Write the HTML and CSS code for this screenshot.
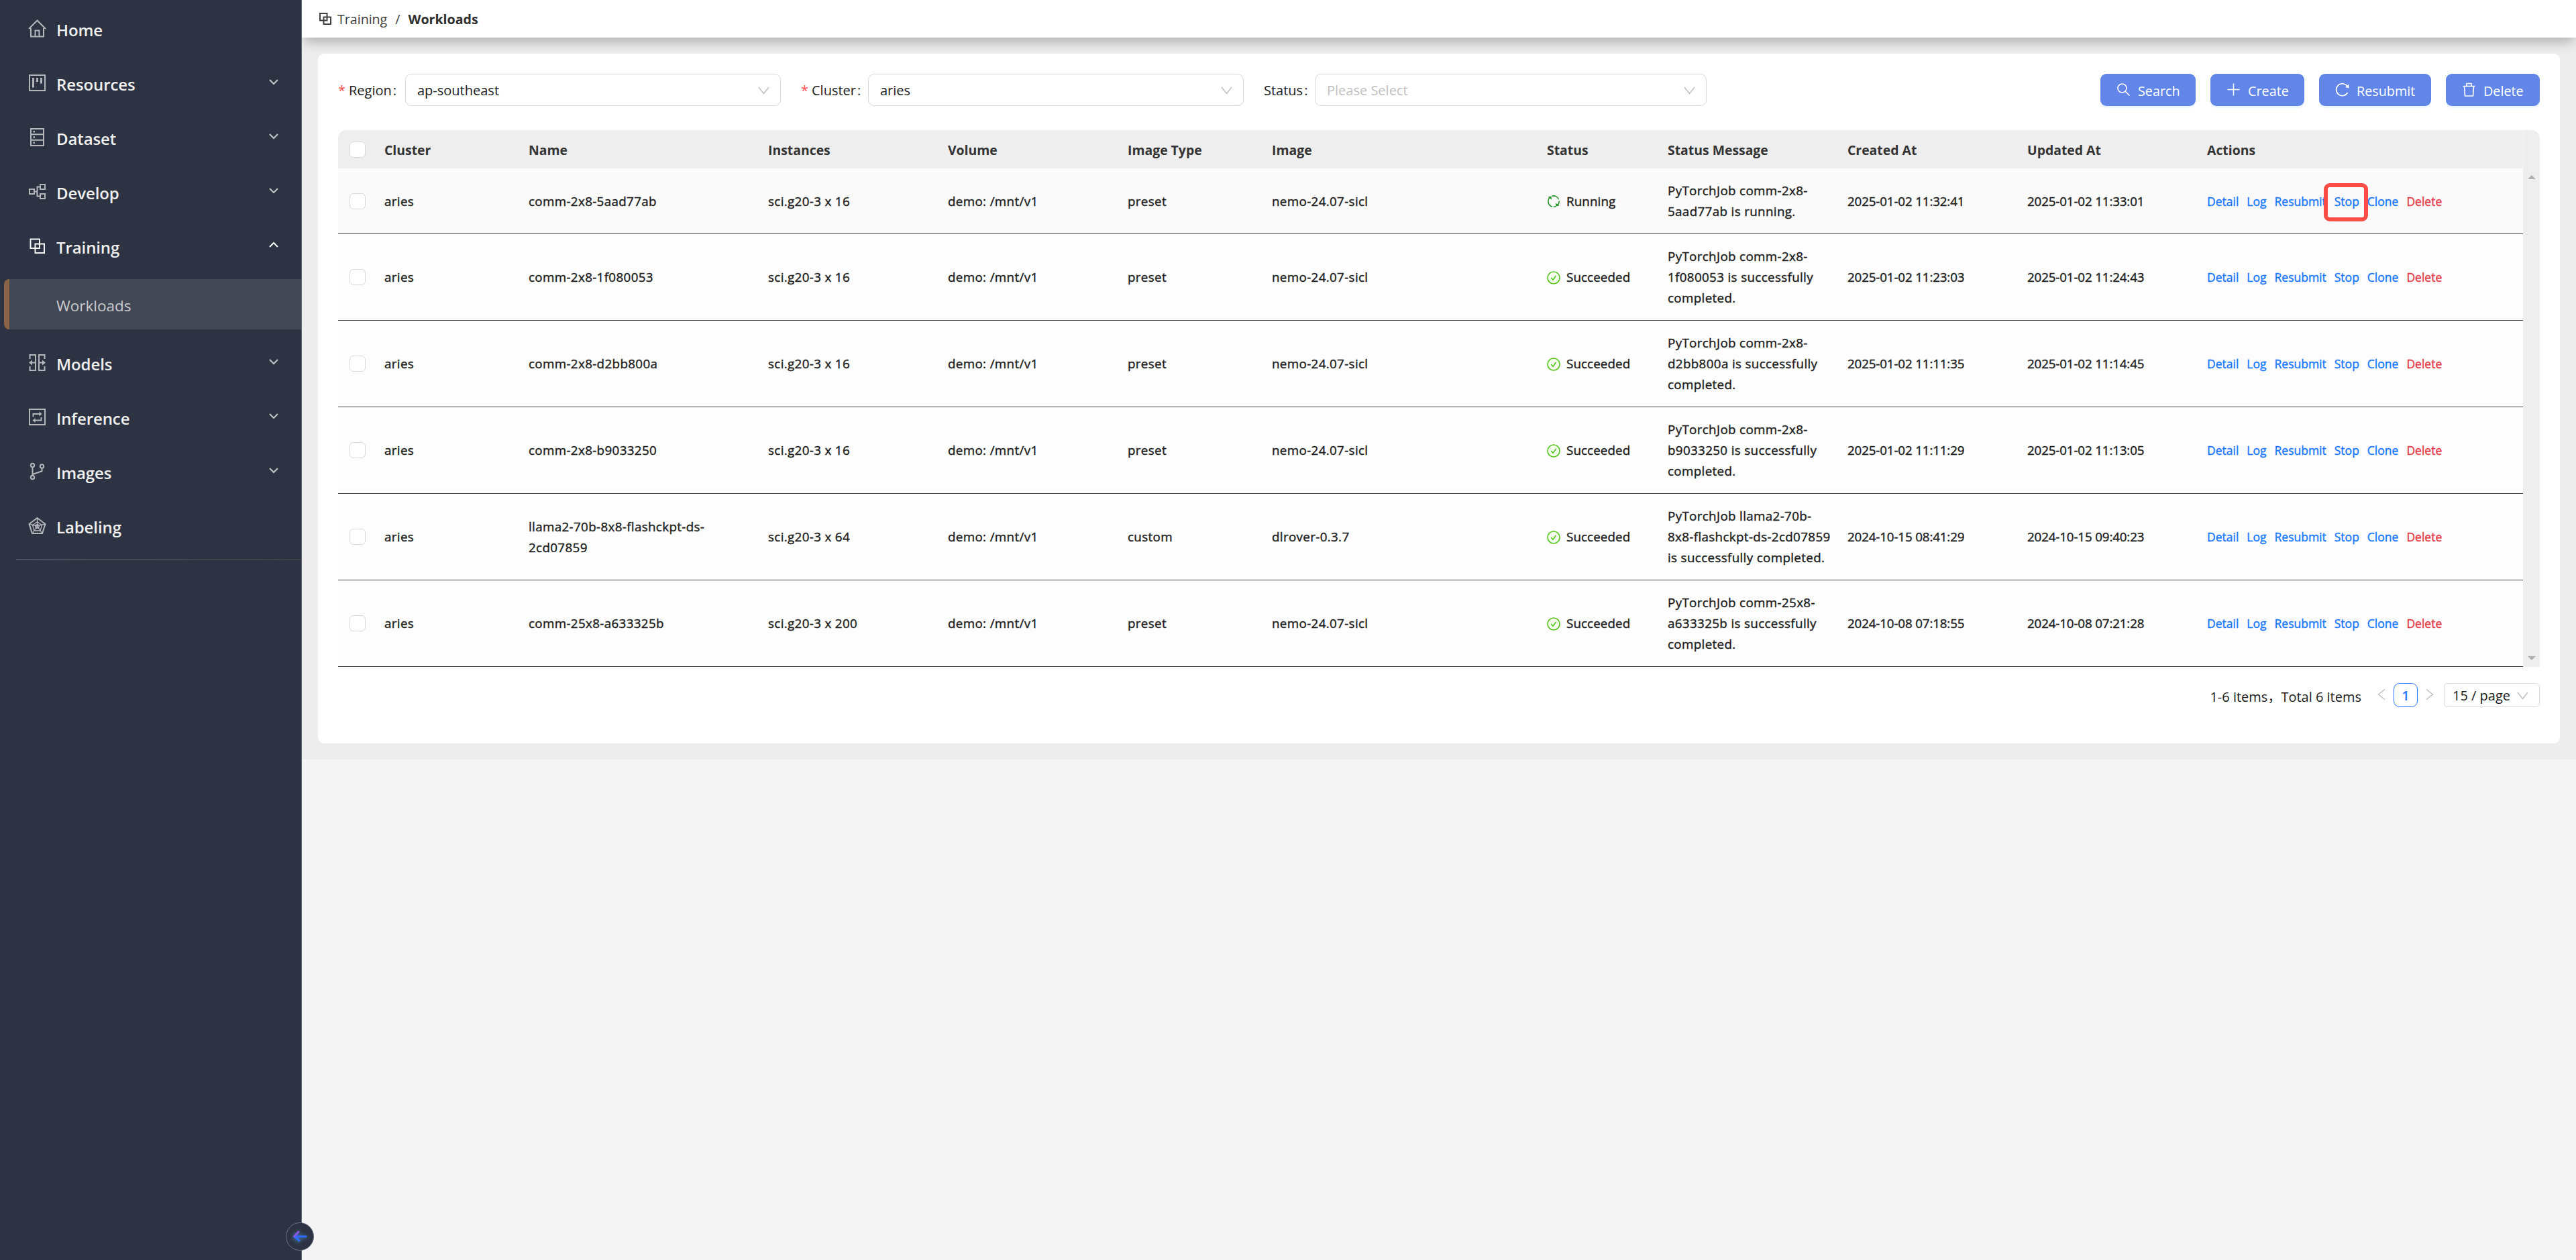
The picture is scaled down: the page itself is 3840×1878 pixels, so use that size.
FILE: index.html
```
<!DOCTYPE html>
<html lang="en">
<head>
  <meta charset="UTF-8">
  <meta name="viewport" content="width=device-width, initial-scale=1.0">
  <title>Workloads</title>
  <link rel="stylesheet" href="styles.css">
</head>
<body>
  <aside class="sidebar">
    <nav class="menu">
      <a class="menu-item">
        <svg class="menu-icon" viewBox="0 0 27 27"><path d="M1 14L13.5 1.5L26 14M4 13v12.5h19V13M10.5 25v-8.500h6V25"/></svg>
        <span>Home</span>
      </a>
      <a class="menu-item">
        <svg class="menu-icon" viewBox="0 0 27 27"><path d="M2 2h23v23H2z"/><path class="solid" d="M6 6h3v14.500H6zM12 6h3v6h-3zM18 6h3v8.500h-3z"/></svg>
        <span>Resources</span>
        <svg class="caret" viewBox="0 0 14 10"><path d="M1 2l6 6l6-6"/></svg>
      </a>
      <a class="menu-item">
        <svg class="menu-icon" viewBox="0 0 27 27"><path d="M4 1h19v25H4zM4 9.300h19M4 17.700h19"/><path class="solid" d="M7.500 4h2.500v2.500H7.500zM7.500 12.200h2.500v2.500H7.500zM7.500 20.500h2.500V23H7.500z"/></svg>
        <span>Dataset</span>
        <svg class="caret" viewBox="0 0 14 10"><path d="M1 2l6 6l6-6"/></svg>
      </a>
      <a class="menu-item">
        <svg class="menu-icon" viewBox="0 0 27 27"><path d="M2 10h7v7H2zM18 3h7v7h-7zM18 17h7v7h-7zM9 13.500h4.500M18 6.500h-4.500v14H18"/></svg>
        <span>Develop</span>
        <svg class="caret" viewBox="0 0 14 10"><path d="M1 2l6 6l6-6"/></svg>
      </a>
      <a class="menu-item open">
        <svg class="menu-icon" viewBox="0 0 27 27"><path d="M3.500 3.500h13.500v13.500H3.500zM10.500 10.500h13.500v13.500H10.500z"/></svg>
        <span>Training</span>
        <svg class="caret" viewBox="0 0 14 10"><path d="M1 8l6-6l6 6"/></svg>
      </a>
      <a class="submenu-item">Workloads</a>
      <a class="menu-item">
        <svg class="menu-icon" viewBox="0 0 27 27"><path d="M2.500 8V2h8.500v23H2.500v-6M24.500 8V2H16v23h8.500v-6M11 13.500H4M16 13.500h7"/><path class="solid" d="M1 13.500l5-4v8zM26 13.500l-5-4v8z"/></svg>
        <span>Models</span>
        <svg class="caret" viewBox="0 0 14 10"><path d="M1 2l6 6l6-6"/></svg>
      </a>
      <a class="menu-item">
        <svg class="menu-icon" viewBox="0 0 27 27"><path d="M2 2h23v23H2zM7.500 13V9H18M19.500 14v4.500H9"/><path class="solid" d="M16.500 5.500l4 3.500l-4 3.500zM10.500 15l-4 3.500l4 3.500z"/></svg>
        <span>Inference</span>
        <svg class="caret" viewBox="0 0 14 10"><path d="M1 2l6 6l6-6"/></svg>
      </a>
      <a class="menu-item">
        <svg class="menu-icon" viewBox="0 0 27 27"><circle cx="6.500" cy="4.500" r="2.700"/><circle cx="6.500" cy="22.500" r="2.700"/><circle cx="20.500" cy="6" r="2.700"/><path d="M6.500 7.200v12.600M20.500 8.700v4.500L6.500 18"/></svg>
        <span>Images</span>
        <svg class="caret" viewBox="0 0 14 10"><path d="M1 2l6 6l6-6"/></svg>
      </a>
      <a class="menu-item">
        <svg class="menu-icon" viewBox="0 0 27 27"><path d="M13.500 2L25.500 11L21 25H6L1.500 11z"/><path class="thin" d="M13.500 7.500L20.500 12.700L18 21H9L6.500 12.700zM13.500 2v12L25.500 11M13.500 14L21 25M13.500 14L6 25M13.500 14L1.500 11M13.500 11l3 2.500l-1 3.500h-4l-1-3.500z"/></svg>
        <span>Labeling</span>
      </a>
    </nav>
    <div class="menu-divider"></div>
    <div class="collapse-btn">
      <svg viewBox="0 0 24 24">
        <path d="M5 12h16" stroke="#2f6bff"/>
        <path d="M4 12l7 6" stroke="#2f6bff"/>
        <path d="M10 5L3.500 12" stroke="#8a55e8"/>
      </svg>
    </div>
  </aside>

  <main class="main">
    <header class="topbar">
      <svg class="crumb-icon" viewBox="0 0 18 18"><path d="M1 1h10.500v10.500H1zM6.500 6.500H17V17H6.500z"/></svg>
      <span class="crumb">Training</span>
      <span class="crumb-sep">/</span>
      <span class="crumb current">Workloads</span>
    </header>

    <section class="content">
      <div class="card">
        <form class="filters">
          <div class="field">
            <label class="required">Region</label>
            <div class="select">ap-southeast<svg class="arrow" viewBox="0 0 17 12"><path d="M1 1l7.500 9.500L16 1"/></svg></div>
          </div>
          <div class="field">
            <label class="required">Cluster</label>
            <div class="select">aries<svg class="arrow" viewBox="0 0 17 12"><path d="M1 1l7.500 9.500L16 1"/></svg></div>
          </div>
          <div class="field field-status">
            <label>Status</label>
            <div class="select placeholder">Please Select<svg class="arrow" viewBox="0 0 17 12"><path d="M1 1l7.500 9.500L16 1"/></svg></div>
          </div>
          <div class="buttons">
            <div class="btn btn-search"><svg viewBox="0 0 21 21"><circle cx="8.500" cy="8.500" r="6.500"/><path d="M13 13l6.500 6.500"/></svg><span>Search</span></div>
            <div class="btn btn-create"><svg viewBox="0 0 21 21"><path d="M10.500 1.500v18M1.500 10.500h18"/></svg><span>Create</span></div>
            <div class="btn btn-resubmit"><svg viewBox="0 0 21 21"><path d="M18.500 15a9 9 0 1 1-.5-9.500"/><path class="solid" d="M20.500 2.500v6l-5.500-1.500z"/></svg><span>Resubmit</span></div>
            <div class="btn btn-delete"><svg viewBox="0 0 21 21"><path d="M1.500 5.500h18M7 5V1.500h7V5M3.500 5.500L4.500 20h12l1-14.500"/></svg><span>Delete</span></div>
          </div>
        </form>

        <div class="table-wrap">
          <table class="table">
            <colgroup>
              <col class="c-check"><col class="c-cluster"><col class="c-name"><col class="c-mid"><col class="c-mid">
              <col class="c-type"><col class="c-image"><col class="c-status"><col class="c-mid"><col class="c-mid"><col class="c-mid"><col>
            </colgroup>
            <thead>
              <tr>
                <th><span class="checkbox"></span></th>
                <th>Cluster</th>
                <th>Name</th>
                <th>Instances</th>
                <th>Volume</th>
                <th>Image Type</th>
                <th>Image</th>
                <th>Status</th>
                <th>Status Message</th>
                <th>Created At</th>
                <th>Updated At</th>
                <th>Actions</th>
              </tr>
            </thead>
            <tbody id="rows"></tbody>
          </table>
          <div class="scroll">
            <div class="scroll-head"></div>
            <div class="scroll-track"><i class="up"></i><i class="down"></i></div>
          </div>
        </div>

        <div class="pagination">
          <span class="total">1-6 items，Total 6 items</span>
          <svg class="page-arrow" viewBox="0 0 12 18"><path d="M11 1.500L1.500 9l9.500 7.500"/></svg>
          <span class="page">1</span>
          <svg class="page-arrow next" viewBox="0 0 12 18"><path d="M1 1.500L10.500 9L1 16.500"/></svg>
          <div class="page-size">15 / page<svg class="arrow" viewBox="0 0 17 12"><path d="M1 1l7.500 9.500L16 1"/></svg></div>
        </div>
      </div>
    </section>
  </main>

  <script>
    const jobs = [
      { name: 'comm-2x8-5aad77ab', count: 16, type: 'preset', image: 'nemo-24.07-sicl', status: 'Running',
        message: 'PyTorchJob comm-2x8-<br>5aad77ab is running.', created: '2025-01-02 11:32:41', updated: '2025-01-02 11:33:01' },
      { name: 'comm-2x8-1f080053', count: 16, type: 'preset', image: 'nemo-24.07-sicl', status: 'Succeeded',
        message: 'PyTorchJob comm-2x8-<br>1f080053 is successfully<br>completed.', created: '2025-01-02 11:23:03', updated: '2025-01-02 11:24:43' },
      { name: 'comm-2x8-d2bb800a', count: 16, type: 'preset', image: 'nemo-24.07-sicl', status: 'Succeeded',
        message: 'PyTorchJob comm-2x8-<br>d2bb800a is successfully<br>completed.', created: '2025-01-02 11:11:35', updated: '2025-01-02 11:14:45' },
      { name: 'comm-2x8-b9033250', count: 16, type: 'preset', image: 'nemo-24.07-sicl', status: 'Succeeded',
        message: 'PyTorchJob comm-2x8-<br>b9033250 is successfully<br>completed.', created: '2025-01-02 11:11:29', updated: '2025-01-02 11:13:05' },
      { name: 'llama2-70b-8x8-flashckpt-ds-<br>2cd07859', count: 64, type: 'custom', image: 'dlrover-0.3.7', status: 'Succeeded',
        message: 'PyTorchJob llama2-70b-<br>8x8-flashckpt-ds-2cd07859<br>is successfully completed.', created: '2024-10-15 08:41:29', updated: '2024-10-15 09:40:23' },
      { name: 'comm-25x8-a633325b', count: 200, type: 'preset', image: 'nemo-24.07-sicl', status: 'Succeeded',
        message: 'PyTorchJob comm-25x8-<br>a633325b is successfully<br>completed.', created: '2024-10-08 07:18:55', updated: '2024-10-08 07:21:28' }
    ];
    const icons = {
      Running: '<svg class="status-icon running" viewBox="0 0 20 20"><path d="M8 18A8.200 8.200 0 0 1 4.500 4M7.500 2.200A8.200 8.200 0 0 1 17.500 7M18.200 9.500A8.200 8.200 0 0 1 15.500 16M13.500 17.500a8 8 0 0 1-4 .7"/><path class="solid" d="M1.500 3.500l5-1l.5 5zM18.500 16.500l-5 1l-.5-5z"/></svg>',
      Succeeded: '<svg class="status-icon" viewBox="0 0 20 20"><circle cx="10" cy="10" r="9"/><path d="M6.200 10l2.800 3.300L13.500 7"/></svg>'
    };
    document.getElementById('rows').innerHTML = jobs.map((job, i) => `
      <tr>
        <td><span class="checkbox"></span></td>
        <td>aries</td>
        <td>${job.name}</td>
        <td>sci.g20-3 x ${job.count}</td>
        <td>demo: /mnt/v1</td>
        <td>${job.type}</td>
        <td>${job.image}</td>
        <td><div class="status">${icons[job.status]}<span>${job.status}</span></div></td>
        <td>${job.message}</td>
        <td class="date">${job.created}</td>
        <td class="date">${job.updated}</td>
        <td>
          <div class="actions">
            <a>Detail</a><a>Log</a><a>Resubmit</a><a class="stop">Stop${i === 0 ? '<i class="marker"></i>' : ''}</a><a>Clone</a><a class="danger">Delete</a>
          </div>
        </td>
      </tr>`).join('');
  </script>
</body>
</html>
```
FILE: styles.css
```
* {
  box-sizing: border-box;
}
body {
  margin: 0;
  display: flex;
  height: 1878px;
  overflow: hidden;
  background: #f4f4f4;
  color: #202020;
  font-family: "Open Sans", "Noto Sans", "Noto Sans CJK SC", sans-serif;
  font-size: 20px;
}
svg {
  fill: none;
  stroke: currentColor;
  stroke-width: 2;
  flex: none;
}
svg .solid {
  fill: currentColor;
  stroke: none;
}
svg .thin {
  stroke-width: 1.3;
}

/* sidebar */
.sidebar {
  position: relative;
  z-index: 3;
  width: 450px;
  flex: none;
  padding-top: 4px;
  background: #2d3342;
  border-right: 1px solid #666c78;
}
.menu-item {
  display: flex;
  align-items: center;
  height: 81px;
  padding: 0 34px 0 42px;
  color: #b4b6bb;
}
.menu-item span {
  margin-left: 15px;
  color: #f0f0f0;
  font-size: 24px;
  font-weight: 600;
  letter-spacing: -0.1px;
}
.menu-icon {
  width: 27px;
  height: 27px;
  margin-bottom: 4px;
}
.caret {
  width: 14px;
  height: 10px;
  margin-left: auto;
  margin-bottom: 8px;
  color: #c4c6ca;
}
.menu-item.open {
  color: #f4f4f4;
}
.menu-item.open .caret {
  color: #fff;
}
.submenu-item {
  display: flex;
  align-items: center;
  height: 75px;
  margin: 7px 0 11px 6px;
  padding-left: 70px;
  padding-top: 3px;
  background: #424755;
  border-left: 8px solid #8a6446;
  border-radius: 8px 0 0 8px;
  color: #c9cbce;
  font-size: 22.500px;
}
.menu-divider {
  height: 2px;
  margin: 7px 0 0 24px;
  background: linear-gradient(90deg, #4b5160, #3d3f45);
}
.collapse-btn {
  position: absolute;
  left: 426px;
  top: 1822px;
  width: 42px;
  height: 42px;
  display: flex;
  align-items: center;
  justify-content: center;
  background: #2d3342;
  border: 1px solid #6b7180;
  border-radius: 50%;
}
.collapse-btn svg {
  width: 24px;
  height: 24px;
  stroke-width: 3;
  stroke-linecap: round;
  filter: drop-shadow(0 1px 3px #4d86b8);
}

/* page header */
.main {
  flex: 1;
  min-width: 0;
}
.topbar {
  position: relative;
  display: flex;
  align-items: center;
  height: 56px;
  padding-left: 26px;
  background: #fff;
  box-shadow: 0 9px 18px -3px rgba(0, 0, 0, 0.27);
  color: #404040;
  font-size: 19.600px;
  z-index: 1;
}
.crumb-icon {
  width: 18px;
  height: 18px;
  margin-right: 9px;
}
.crumb-sep {
  margin: 0 12px;
}
.crumb.current {
  color: #303030;
  font-weight: 700;
}
.content {
  height: 1076px;
  padding: 24px;
  background: #ededed;
}
.card {
  position: relative;
  z-index: 2;
  height: 1028px;
  padding: 30px;
  background: #fff;
  border-radius: 9px;
}

/* filters */
.filters {
  display: flex;
  align-items: center;
  height: 48px;
  margin-bottom: 36px;
}
.field {
  display: flex;
  align-items: center;
  width: 660px;
  margin-right: 30px;
}
.field label {
  flex: 1;
  padding-top: 1px;
  white-space: nowrap;
}
.field label::after {
  content: ":";
  margin-left: 2px;
}
.required::before {
  content: "*";
  margin: 0 5px 0 0;
  color: #ff4d4f;
}
.select {
  display: flex;
  align-items: center;
  justify-content: space-between;
  width: 560px;
  height: 48px;
  padding: 1px 16px 0 17px;
  border: 1px solid #d9d9d9;
  border-radius: 9px;
}
.field-status .select {
  width: 584px;
}
.select.placeholder {
  color: #bfbfbf;
}
.arrow {
  width: 17px;
  height: 12px;
  color: #bfbfbf;
  stroke-width: 1.500;
}
.buttons {
  display: flex;
  margin-left: auto;
  gap: 22px;
}
.btn {
  display: flex;
  align-items: center;
  gap: 11px;
  width: 140px;
  height: 48px;
  padding: 2px 0 0 24px;
  background: #6186e8;
  border-radius: 9px;
  box-shadow: 0 3px 0 rgba(5, 145, 255, 0.08);
  color: #fff;
  font-size: 19.800px;
}
.btn svg {
  width: 21px;
  height: 21px;
  margin-bottom: 3px;
  stroke-width: 1.600;
}
.btn-search {
  width: 142px;
}
.btn-resubmit {
  width: 167px;
}

/* table */
.table-wrap {
  display: flex;
  height: 800px;
}
.table {
  width: 3257px;
  table-layout: fixed;
  border-collapse: separate;
  border-spacing: 0;
}
.c-check { width: 57px; }
.c-cluster { width: 215px; }
.c-name { width: 357px; }
.c-mid { width: 268px; }
.c-type { width: 215px; }
.c-image { width: 410px; }
.c-status { width: 180px; }
th {
  height: 57px;
  padding: 2px 12px 0;
  background: #eee;
  color: #333;
  font-size: 19.400px;
  font-weight: 700;
  text-align: left;
}
th:first-child {
  border-top-left-radius: 12px;
}
td {
  height: 129px;
  padding: 1px 12px 0;
  background: #fdfdfd;
  border-bottom: 1px solid #3f3f3f;
  font-size: 18.800px;
  letter-spacing: 0.35px;
  line-height: 31px;
  white-space: nowrap;
  -webkit-text-stroke: 0.4px currentColor;
}
td.date {
  letter-spacing: -0.15px;
}
tr:first-child td {
  height: 98px;
  background: #fafafa;
}
th:first-child, td:first-child {
  padding: 0 0 0 17px;
}
.checkbox {
  display: block;
  width: 24px;
  height: 24px;
  background: #fff;
  border: 1px solid #d9d9d9;
  border-radius: 6px;
}
.status {
  display: flex;
  align-items: center;
  gap: 9px;
  letter-spacing: 0.1px;
}
.status-icon {
  width: 20px;
  height: 20px;
  color: #52c41a;
  stroke-width: 1.600;
}
.status-icon circle {
  fill: #f6ffed;
}
.status-icon.running {
  color: #1f9423;
}
.actions {
  display: flex;
  gap: 12px;
  color: #1677ff;
  font-size: 17.500px;
  letter-spacing: 0;
}
.actions .danger {
  color: #e23c48;
}
.stop {
  position: relative;
}
.marker {
  position: absolute;
  left: -16px;
  top: -12px;
  width: 66px;
  height: 57px;
  border: 6px solid #fb4d45;
  border-radius: 9px;
}
.scroll {
  width: 25px;
  display: flex;
  flex-direction: column;
}
.scroll-head {
  height: 57px;
  background: #eee;
  border-left: 1px solid #f6f6f6;
  border-top-right-radius: 12px;
}
.scroll-track {
  flex: 1;
  display: flex;
  flex-direction: column;
  justify-content: space-between;
  align-items: center;
  padding: 10px 0;
  background: #eee;
}
.scroll-track i {
  border: 6px solid transparent;
}
.scroll-track .up {
  border-top: 0;
  border-bottom-color: #b0b0b0;
}
.scroll-track .down {
  border-bottom: 0;
  border-top-color: #b0b0b0;
}

/* pagination */
.pagination {
  display: flex;
  align-items: center;
  justify-content: flex-end;
  height: 36px;
  margin-top: 24px;
}
.total {
  margin-right: 24px;
  padding-top: 3px;
}
.page-arrow {
  width: 12px;
  height: 18px;
  margin-bottom: 2px;
  color: #bfbfbf;
  stroke-width: 1.500;
}
.page-arrow.next {
  margin: 0 15px 2px 12px;
}
.page {
  width: 36px;
  height: 36px;
  margin-left: 12px;
  border: 1px solid #2b72ff;
  border-radius: 9px;
  color: #2b72ff;
  font-weight: 600;
  line-height: 35px;
  text-align: center;
}
.page-size {
  display: flex;
  align-items: center;
  justify-content: space-between;
  width: 143px;
  height: 36px;
  padding: 1px 16px 0 12px;
  border: 1px solid #d9d9d9;
  border-radius: 6px;
}
```
